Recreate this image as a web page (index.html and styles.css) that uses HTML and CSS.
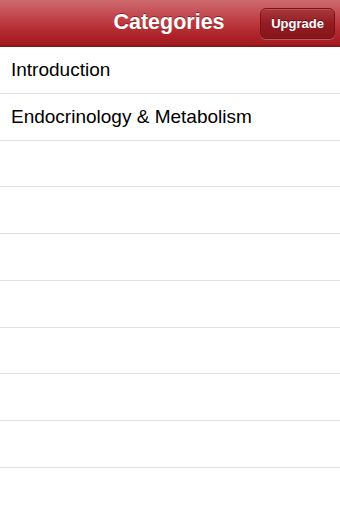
FILE: index.html
```html
<!DOCTYPE html>
<html lang="en">
<head>
    <meta charset="UTF-8">
    <meta name="viewport" content="width=device-width, initial-scale=1.0">
    <title>Categories</title>
    <link rel="stylesheet" href="styles.css">
</head>
<body>
    <div class="navbar">
        <h1 class="nav-title">Categories</h1>
        <button class="nav-button">Upgrade</button>
    </div>

    <ul class="table">
        <li class="cell">Introduction</li>
        <li class="cell">Endocrinology &amp; Metabolism</li>
        <li class="cell"></li>
        <li class="cell"></li>
        <li class="cell"></li>
        <li class="cell"></li>
        <li class="cell"></li>
        <li class="cell"></li>
        <li class="cell"></li>
        <li class="cell"></li>
    </ul>
</body>
</html>
```

FILE: styles.css
```css
body {
    margin: 0;
    font-family: "Liberation Sans", Arial, sans-serif;
    background: #ffffff;
    width: 340px;
    height: 510px;
    overflow: hidden;
}
.navbar {
    position: relative;
    height: 45px;
    display: flex;
    align-items: center;
    justify-content: center;
    background: linear-gradient(to bottom, #cd6a6f 0%, #be3f45 45%, #ac2228 80%, #a31a20 100%);
    border-bottom: 2px solid #8a1519;
}
.nav-title {
    margin: 0 0 0 -2px;
    color: #fff;
    font-size: 21.5px;
    font-weight: bold;
    text-shadow: 0 -1px 0 rgba(90,0,0,0.5);
}
.nav-button {
    position: absolute;
    right: 5px;
    top: 8px;
    height: 31px;
    width: 75px;
    padding: 0;
    border: 1px solid #7c1216;
    border-radius: 6px;
    background: linear-gradient(to bottom, #a9383d 0%, #941c21 50%, #85161a 100%);
    box-shadow: 0 1px 0 rgba(255,255,255,0.25), inset 0 1px 0 rgba(255,255,255,0.15);
    color: #fff;
    font-family: "Liberation Sans", Arial, sans-serif;
    font-size: 13px;
    font-weight: bold;
    text-shadow: 0 -1px 0 rgba(60,0,0,0.5);
}
.table {
    list-style: none;
    margin: 0;
    padding: 0;
}
.cell {
    box-sizing: border-box;
    height: 46.75px;
    padding: 0 11px;
    display: flex;
    align-items: center;
    border-bottom: 1px solid #e0e0e0;
    font-size: 19px;
    color: #000;
}
```
